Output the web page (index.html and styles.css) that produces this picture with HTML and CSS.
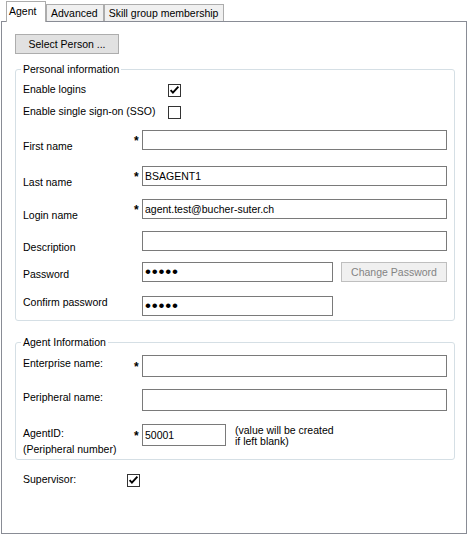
FILE: index.html
```html
<!DOCTYPE html>
<html lang="en">

<head>
	<meta charset="UTF-8" />
	<title>Agent</title>
	<link rel="stylesheet" href="styles.css">
</head>

<body>
	<div class="dialog">
		<div class="tabs">
			<div class="tab active">Agent</div>
			<div class="tab">Advanced</div>
			<div class="tab">Skill group membership</div>
		</div>
		<div class="panel">
			<button class="btn select-btn">Select Person ...</button>

			<fieldset class="group personal">
				<legend>Personal information</legend>
				<div class="check-row">
					<span class="label">Enable logins</span>
					<svg class="check" width="13" height="13" viewBox="0 0 13 13"><rect x="0.5" y="0.5" width="12" height="12" fill="#fff" stroke="#333" /><path d="M2.6 6.2 L4.9 8.6 L10.4 2.6" fill="none" stroke="#000" stroke-width="1.9" /></svg>
				</div>
				<div class="check-row">
					<span class="label">Enable single sign-on (SSO)</span>
					<svg class="check" width="13" height="13" viewBox="0 0 13 13"><rect x="0.5" y="0.5" width="12" height="12" fill="#fff" stroke="#333" /></svg>
				</div>
				<div class="row">
					<label class="label low">First name</label><span class="req">*</span>
					<input class="field" type="text" value="" />
				</div>
				<div class="row">
					<label class="label low">Last name</label><span class="req">*</span>
					<input class="field" type="text" value="BSAGENT1" />
				</div>
				<div class="row">
					<label class="label low">Login name</label><span class="req">*</span>
					<input class="field" type="text" value="agent.test@bucher-suter.ch" />
				</div>
				<div class="row">
					<label class="label low">Description</label><span class="req"></span>
					<input class="field" type="text" value="" />
				</div>
				<div class="row">
					<label class="label mid">Password</label><span class="req"></span>
					<input class="field pass" type="password" value="agent" />
					<button class="btn change-btn">Change Password</button>
				</div>
				<div class="row">
					<label class="label">Confirm password</label><span class="req"></span>
					<input class="field pass" type="password" value="agent" />
				</div>
			</fieldset>

			<fieldset class="group agent">
				<legend>Agent Information</legend>
				<div class="row">
					<label class="label">Enterprise name:</label><span class="req">*</span>
					<input class="field" type="text" value="" />
				</div>
				<div class="row">
					<label class="label">Peripheral name:</label><span class="req"></span>
					<input class="field" type="text" value="" />
				</div>
				<div class="row">
					<label class="label two">AgentID:<br>(Peripheral number)</label><span class="req">*</span>
					<input class="field short" type="text" value="50001" />
					<span class="note">(value will be created<br>if left blank)</span>
				</div>
			</fieldset>

			<div class="check-row supervisor">
				<span class="label">Supervisor:</span>
				<svg class="check" width="13" height="13" viewBox="0 0 13 13"><rect x="0.5" y="0.5" width="12" height="12" fill="#fff" stroke="#333" /><path d="M2.6 6.2 L4.9 8.6 L10.4 2.6" fill="none" stroke="#000" stroke-width="1.9" /></svg>
			</div>
		</div>
	</div>
</body>

</html>
```

FILE: styles.css
```css
* {
	box-sizing: border-box;
}

body {
	margin: 0;
	background-color: #fff;
	color: #000;
	font-family: "Liberation Sans", Arial, sans-serif;
	font-size: 10.5px;
}

.dialog {
	width: 468px;
	height: 535px;
	padding-top: 1px;
}

/* tab strip */
.tabs {
	display: flex;
	align-items: flex-end;
	height: 21px;
	margin-left: 6px;
	margin-bottom: -1px;
	position: relative;
	z-index: 1;
}

.tab {
	height: 17px;
	margin-bottom: 1px;
	padding: 1px 5px 0 4px;
	line-height: 14px;
	background-color: #f0f0f0;
	border: 1px solid #acacac;
	border-bottom: none;
	white-space: nowrap;
}

.tab.active {
	width: 40px;
	height: 21px;
	margin-bottom: 0;
	padding: 1px 0 0 2px;
	line-height: 16px;
	background-color: #fff;
}

.panel {
	width: 466px;
	height: 513px;
	margin-left: 1px;
	padding: 12px 0 0 13px;
	background-color: #fff;
	border: 1px solid #898c95;
}

.btn {
	display: flex;
	align-items: center;
	justify-content: center;
	height: 20px;
	padding: 0;
	font-family: inherit;
	font-size: inherit;
	color: #000;
	background-color: #e1e1e1;
	border: 1px solid #adadad;
}

.select-btn {
	width: 104px;
}

.change-btn {
	width: 106px;
	margin-left: 8px;
	color: #838383;
	background-color: #f0f0f0;
	border-color: #bfbfbf;
}

/* group boxes */
.group {
	display: grid;
	width: 440px;
	margin: 9px 0 0 0;
	padding: 0 7px 4px 7px;
	border: 1px solid #d5dfe5;
	border-radius: 3px;
	min-width: 0;
}

.group legend {
	margin-left: -2px;
	padding: 0 2px;
	line-height: 12px;
}

.personal {
	padding-top: 9px;
	grid-template-rows: 22px 24px 36px 33px 32px 31px 34px 20px;
}

.agent {
	margin-top: 15px;
	padding-top: 7px;
	padding-bottom: 2px;
	grid-template-rows: 34px 35px auto;
}

.check-row {
	display: flex;
	align-items: flex-start;
}

.check-row .label {
	width: 145px;
	margin-top: -1px;
	line-height: 13px;
}

.check {
	display: block;
}

.supervisor {
	margin-top: 14px;
	padding-left: 8px;
}

.supervisor .label {
	width: 104px;
}

.row {
	display: flex;
	align-items: flex-start;
}

.row .label {
	width: 111px;
	line-height: 12px;
	white-space: nowrap;
}

.row .label.low {
	padding-top: 10px;
}

.row .label.mid {
	padding-top: 6px;
}

.agent .row .label {
	line-height: 16px;
}

.agent .row .label.two {
	padding-top: 1px;
}

.req {
	width: 8px;
	padding-top: 4px;
	font-size: 12px;
	font-weight: bold;
	line-height: 14px;
}

.field {
	width: 305px;
	height: 20px;
	margin: 0;
	padding: 0 2px;
	font-family: inherit;
	font-size: 10.5px;
	color: #000;
	background-color: #fff;
	border: 1px solid #7a7a7a;
	border-radius: 0;
	outline: none;
}

.agent .field {
	height: 22px;
}

.agent .req {
	padding-top: 5px;
}

.field.pass {
	width: 191px;
	font-size: 17px;
	letter-spacing: 0.8px;
}

.field.short {
	width: 84px;
}

.note {
	margin-left: 9px;
	line-height: 11px;
	padding-top: 1px;
}
```
